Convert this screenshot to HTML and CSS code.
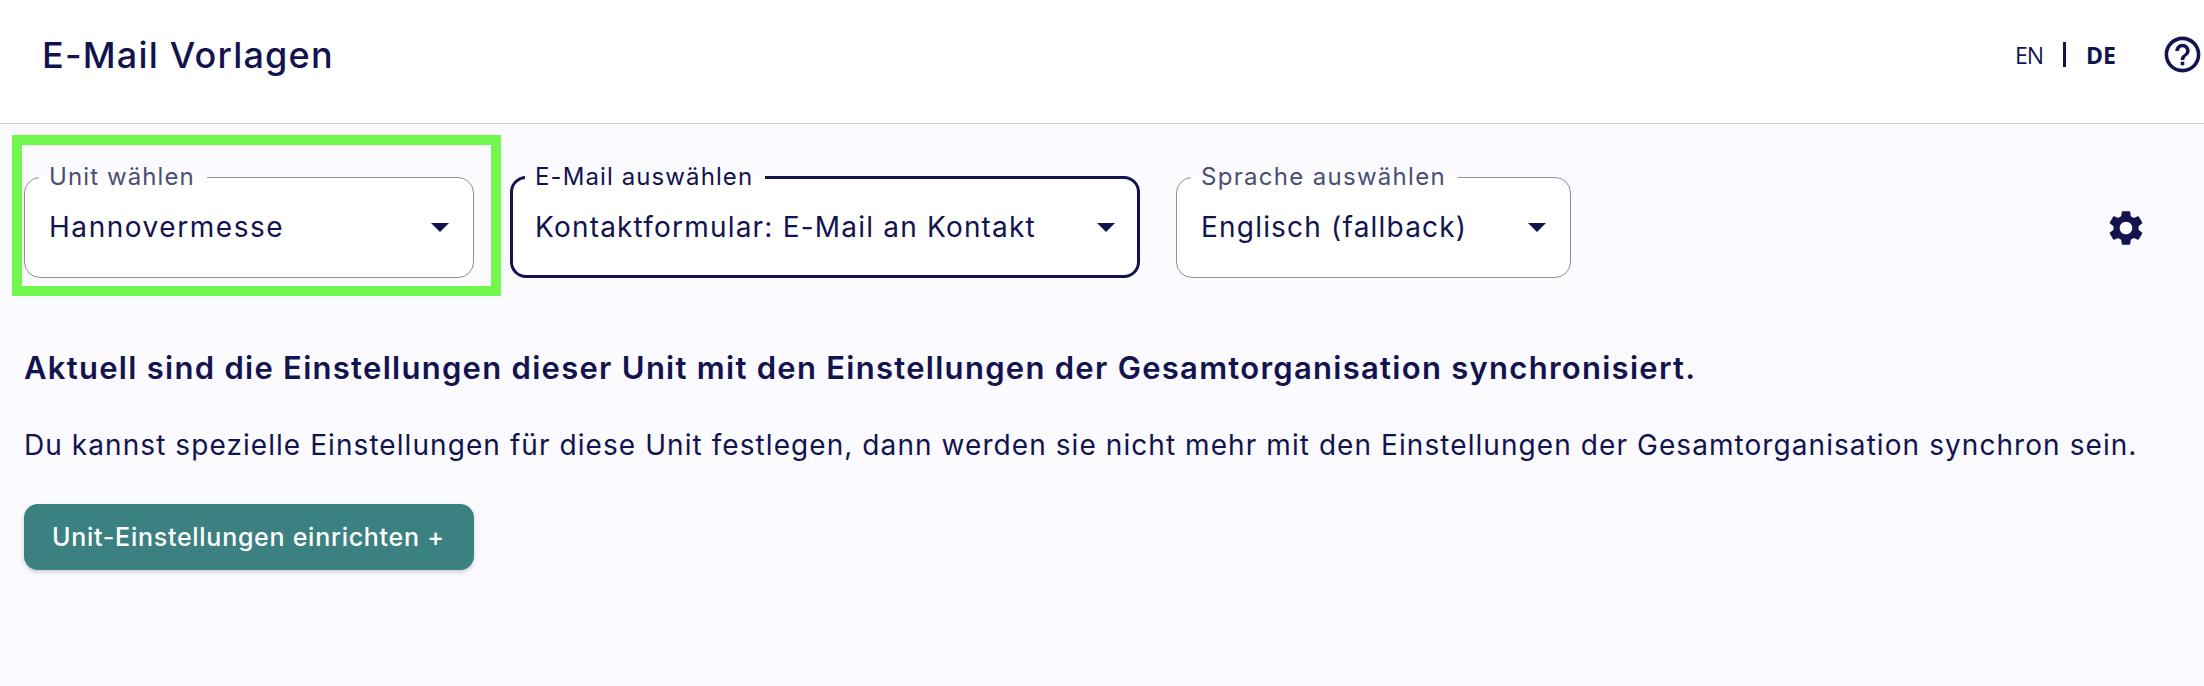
FILE: index.html
```html
<!DOCTYPE html>
<html lang="de">
<head>
<meta charset="utf-8">
<title>E-Mail Vorlagen</title>
<link rel="stylesheet" href="styles.css">
</head>
<body>
<header class="topbar">
  <h1 class="title">E-Mail Vorlagen</h1>
  <div class="topbar-actions">
    <div class="lang">
      <span class="lang-item lang-idle">EN</span>
      <span class="lang-sep"></span>
      <span class="lang-item lang-active">DE</span>
    </div>
    <svg class="help" viewBox="0 0 24 24" aria-hidden="true"><path d="M11 18h2v-2h-2v2zm1-16C6.48 2 2 6.48 2 12s4.48 10 10 10 10-4.48 10-10S17.52 2 12 2zm0 18c-4.41 0-8-3.59-8-8s3.59-8 8-8 8 3.59 8 8-3.59 8-8 8zm0-14c-2.21 0-4 1.79-4 4h2c0-1.1.9-2 2-2s2 .9 2 2c0 2-3 1.75-3 5h2c0-2.25 3-2.5 3-5 0-2.21-1.79-4-4-4z"/></svg>
  </div>
</header>
<main class="content">
  <div class="filters">
    <div class="highlight"></div>
    <fieldset class="field field-unit">
      <legend class="field-label">Unit wählen</legend>
      <div class="field-row"><span class="field-value">Hannovermesse</span><span class="arrow"></span></div>
    </fieldset>
    <fieldset class="field field-mail field-focus">
      <legend class="field-label">E-Mail auswählen</legend>
      <div class="field-row"><span class="field-value">Kontaktformular: E-Mail an Kontakt</span><span class="arrow"></span></div>
    </fieldset>
    <fieldset class="field field-lang">
      <legend class="field-label">Sprache auswählen</legend>
      <div class="field-row"><span class="field-value">Englisch (fallback)</span><span class="arrow"></span></div>
    </fieldset>
    <svg class="gear" viewBox="0 0 24 24" aria-hidden="true"><path d="M19.14 12.94c.04-.3.06-.61.06-.94 0-.32-.02-.64-.07-.94l2.03-1.58c.18-.14.23-.41.12-.61l-1.92-3.32c-.12-.22-.37-.29-.59-.22l-2.39.96c-.5-.38-1.03-.7-1.62-.94l-.36-2.54c-.04-.24-.24-.41-.48-.41h-3.84c-.24 0-.43.17-.47.41l-.36 2.54c-.59.24-1.13.57-1.62.94l-2.39-.96c-.22-.08-.47 0-.59.22L2.74 8.87c-.12.21-.08.47.12.61l2.03 1.58c-.05.3-.09.63-.09.94s.02.64.07.94l-2.03 1.58c-.18.14-.23.41-.12.61l1.92 3.32c.12.22.37.29.59.22l2.39-.96c.5.38 1.03.7 1.62.94l.36 2.54c.05.24.24.41.48.41h3.84c.24 0 .44-.17.47-.41l.36-2.54c.59-.24 1.13-.56 1.62-.94l2.39.96c.22.08.47 0 .59-.22l1.92-3.32c.12-.22.07-.47-.12-.61l-2.01-1.58zM12 15.6c-1.98 0-3.6-1.62-3.6-3.6s1.62-3.6 3.6-3.6 3.6 1.62 3.6 3.6-1.62 3.6-3.6 3.6z"/></svg>
  </div>
  <h2 class="notice">Aktuell sind die Einstellungen dieser Unit mit den Einstellungen der Gesamtorganisation synchronisiert.</h2>
  <p class="hint">Du kannst spezielle Einstellungen für diese Unit festlegen, dann werden sie nicht mehr mit den Einstellungen der Gesamtorganisation synchron sein.</p>
  <button class="action" type="button">Unit-Einstellungen einrichten +</button>
</main>
</body>
</html>
```
FILE: styles.css
```css
* { box-sizing: border-box; }
html, body { margin: 0; height: 100%; }
body {
  background: #fafaff;
  color: #12134f;
  font-family: "Inter", "Noto Sans", sans-serif;
  overflow: hidden;
}
.topbar {
  height: 124px;
  background: #fff;
  border-bottom: 1px solid #cfcfd8;
  display: flex;
  align-items: center;
  justify-content: space-between;
  padding: 0 0 14px 42px;
}
.title {
  margin: 0;
  font-size: 36px;
  font-weight: 500;
  letter-spacing: 1.2px;
}
.topbar-actions {
  display: flex;
  align-items: center;
  gap: 45px;
}
.lang {
  display: flex;
  align-items: center;
  gap: 20px;
  font-family: "Open Sans", sans-serif;
  font-size: 23px;
}
.lang-idle { letter-spacing: -1px; }
.lang-active { font-weight: 700; }
.lang-sep { width: 3px; height: 25px; background: #12134f; }
.help { width: 43px; height: 43px; fill: #12134f; display: block; }
.content { padding: 0 24px; }
.filters {
  position: relative;
  display: flex;
  align-items: flex-end;
  padding-top: 39px;
}
.highlight {
  position: absolute;
  left: -12px;
  top: 11px;
  width: 489px;
  height: 161px;
  border: 10px solid #72f84c;
}
.field {
  margin: 0;
  height: 115px;
  padding: 0 24px;
  border: 1px solid #8f8f98;
  border-radius: 16px;
  background: #fff;
  min-width: 0;
}
.field-unit { width: 450px; }
.field-mail { width: 630px; margin-left: 36px; }
.field-lang { width: 395px; margin-left: 36px; }
.field-focus { border: 3px solid #12134f; padding: 0 22px; }
.field-label {
  padding: 0 12px 0 10px;
  margin-left: -10px;
  font-size: 24px;
  letter-spacing: 1.1px;
  line-height: 28px;
  color: #4a4d74;
  white-space: nowrap;
}
.field-lang .field-label { letter-spacing: 1.3px; }
.field-focus .field-label { color: #12134f; }
.field-row {
  display: flex;
  align-items: center;
  justify-content: space-between;
  height: 72px;
}
.field-value { font-size: 28px; letter-spacing: 1.2px; white-space: nowrap; }
.field-unit .field-value { letter-spacing: 1.55px; }
.arrow {
  width: 0;
  height: 0;
  border-left: 9px solid transparent;
  border-right: 9px solid transparent;
  border-top: 9px solid #12134f;
}
.gear {
  width: 42px;
  height: 42px;
  fill: #12134f;
  margin: 0 33px 29px auto;
}
.notice {
  margin: 70px 0 0;
  font-size: 31px;
  font-weight: 600;
  letter-spacing: 1.28px;
  line-height: 40px;
  white-space: nowrap;
}
.hint {
  margin: 37px 0 0;
  font-size: 28px;
  letter-spacing: 1.07px;
  line-height: 40px;
  white-space: nowrap;
}
.action {
  display: block;
  margin: 39px 0 0;
  padding: 0 0 0 28px;
  width: 450px;
  height: 66px;
  border: 0;
  border-radius: 14px;
  background: #3b8182;
  color: #fff;
  font: 500 25px "Inter", sans-serif;
  letter-spacing: 0.73px;
  text-align: left;
  box-shadow: 0 2px 4px rgba(0,0,0,.2);
}
```
